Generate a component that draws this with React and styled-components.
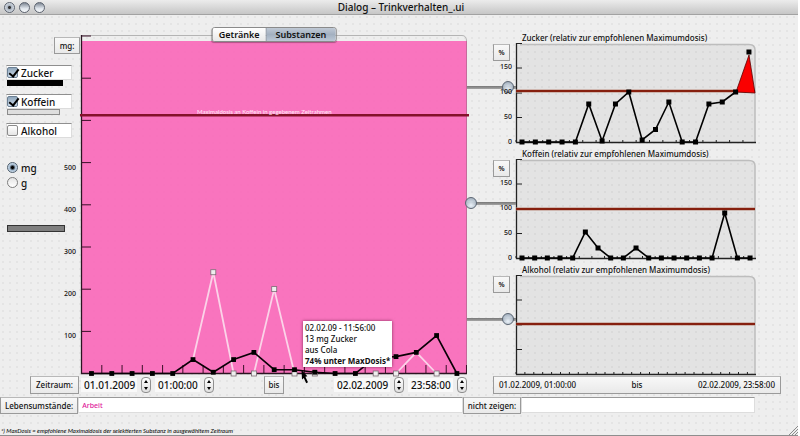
import React, { useState } from 'react'
import styled, { createGlobalStyle, css } from 'styled-components';

const zuckerMain = [0, 0, 0, 0, 0, 33, 3, 33, 50, 9, 9, 3, 0, 0, 38, 40, 50, 90, 0];
const koffeinPeaks = [
    [[5, 33], [6, 240], [7, 0]],
    [[8, 0], [9, 200], [10, 0]],
    [[15, 0], [16, 50], [17, 0]],
];
const koffeinMarks = [[6, 240], [7, 0], [8, 0], [9, 200], [10, 0], [11, 0], [14, 0], [15, 0], [17, 0]];

const panels = [
    {
        name: 'Zucker',
        slider: 100,
        labels: [150, 100, 50, 0],
        limit: 48,
        tick: 13.35,
        step: 13.35,
        data: [0, 0, 0, 0, 0, 76, 2, 76, 100, 4, 25, 80, 0, 0, 76, 80, 100, 180],
        over: '220,49 233,12 239,50',
    },
    {
        name: 'Koffein',
        slider: 0,
        labels: [150, 100, 50, 0],
        limit: 50,
        tick: 12.65,
        step: 12.67,
        data: [0, 0, 0, 0, 0, 52, 20, 0, 0, 20, 0, 0, 0, 0, 0, 0, 90, 0, 0],
    },
    {
        name: 'Alkohol',
        slider: 100,
        labels: [],
        limit: 49,
        tick: 8.9,
        step: 0,
        data: [],
    },
];

const mainX = (i) => 10.5 + i * 20.3;
const mainY = (v) => 338.5 - v * 0.422;

const MainChart = () => {
    const points = zuckerMain.map((v, i) => [mainX(i), mainY(v)]);
    return (
        <ChartSvg $height={340} viewBox='0 0 386 340' preserveAspectRatio='none'>
            <path d='M0 0.5H381Q385.5 0.5 385.5 6' fill='none' stroke='#b4b4b4' />
            <rect x='0' y='6' width='386' height='333' fill='#fb5bb4' fillOpacity='0.83' />
            <path d='M385.5 6V338' stroke='#c76a9c' />
            {[0, 1, 2, 3, 4, 5, 6, 7].map((i) => (
                <path key={i} d={`M0 ${1 + i * 42.2}H10`} stroke='#3a1028' />
            ))}
            {Array.from({ length: 19 }, (_, i) => (
                <path key={i} d={`M${20.8 + i * 20.26} 330V338`} stroke='#3a1028' />
            ))}
            <path d='M0.5 0V338.5H386' fill='none' stroke='#2c1422' strokeWidth='1.3' />
            {koffeinPeaks.map((peak, i) => (
                <polyline
                    key={i}
                    points={peak.map(([n, v]) => `${mainX(n)},${mainY(v)}`).join(' ')}
                    fill='none'
                    stroke='#fbd3e8'
                    strokeWidth='1.8'
                />
            ))}
            {koffeinMarks.map(([n, v]) => (
                <rect key={n} x={mainX(n) - 2.5} y={mainY(v) - 2.5} width='5' height='5' fill='#eee' stroke='#7b6b74' strokeWidth='0.8' />
            ))}
            <polyline points={points.join(' ')} fill='none' stroke='#0a0006' strokeWidth='1.6' />
            {points.map(([x, y]) => (
                <rect key={x} x={x - 2.4} y={y - 2.4} width='4.8' height='4.8' />
            ))}
            <path d='M-1 80.3H388' stroke='#84122b' strokeWidth='2.6' />
        </ChartSvg>
    )
}

const SmallChart = ({ limit, tick, step, data, over }) => {
    const points = data.map((v, i) => [6 + i * step, 99 - v * 0.5]);
    return (
        <ChartSvg $height={101} viewBox='0 0 239 101' preserveAspectRatio='none'>
            <path d='M0 1.5H233Q239 1.5 239 7V99H0Z' fill='#000' fillOpacity='0.045' />
            <path d='M4 1.5H233Q239 1.5 239 7V99' fill='none' stroke='#bdbdbd' strokeWidth='1.5' />
            {Array.from({ length: Math.floor(239 / tick) + 1 }, (_, i) => (
                <path key={i} d={`M${i * tick} 97V99`} stroke='#222' />
            ))}
            {[0.5, 25, 50, 74.5].map((y) => (
                <path key={y} d={`M0 ${y}H6`} stroke='#222' />
            ))}
            <path d='M0.5 0V99.5H240' fill='none' stroke='#222' strokeWidth='1.3' />
            <path d={`M0 ${limit}H239`} stroke='#b98a7c' strokeWidth='3.2' />
            <path d={`M0 ${limit}H239`} stroke='#86200f' strokeWidth='2' />
            {over && <polygon points={over} fill='#fa0000' stroke='#5a0000' strokeWidth='0.8' />}
            <polyline points={points.slice(0, over ? -1 : undefined).join(' ')} fill='none' stroke='#000' strokeWidth='1.6' />
            {points.map(([x, y]) => (
                <rect key={x} x={x - 2.5} y={y - 2.5} width='5' height='5' />
            ))}
        </ChartSvg>
    )
}

const Stepper = ({ name }) => (
    <StepperBox>
        <button type='button' aria-label={`${name} +`}>
            <svg width='4' height='3' viewBox='0 0 4 3'><path d='M2 0L4 3H0Z' /></svg>
        </button>
        <button type='button' aria-label={`${name} -`}>
            <svg width='4' height='3' viewBox='0 0 4 3'><path d='M2 3L4 0H0Z' /></svg>
        </button>
    </StepperBox>
)

const DateTime = ({ id, date, time }) => (
    <DateGroup>
        <DateInput id={id} aria-label='Datum' defaultValue={date} $width={56} />
        <Stepper name='Datum' />
        <DateInput aria-label='Zeit' defaultValue={time} $width={45} />
        <Stepper name='Zeit' />
    </DateGroup>
)

const Panel = ({ panel }) => {
    const [value, setValue] = useState(panel.slider);
    return (
        <PanelGrid>
            <AxisColumn>
                <UnitBox>%</UnitBox>
                <SmallAxis>
                    {panel.labels.map((label) => <span key={label}>{label}</span>)}
                </SmallAxis>
                <Slider
                    type='range'
                    aria-label={panel.name}
                    value={value}
                    onChange={(e) => setValue(e.target.value)}
                />
            </AxisColumn>
            <div>
                <PanelTitle>{panel.name} (relativ zur empfohlenen Maximumdosis)</PanelTitle>
                <SmallChart {...panel} />
            </div>
        </PanelGrid>
    )
}

const App = () => {
    const [tab, setTab] = useState('Substanzen');
    const [unit, setUnit] = useState('mg');

    return (
        <Window>
            <GlobalStyle />
            <TitleBar>
                <Lights>
                    <Light type='button' aria-label='Schließen' $dot />
                    <Light type='button' aria-label='Minimieren' />
                    <Light type='button' aria-label='Zoomen' />
                </Lights>
                <h1>Dialog – Trinkverhalten_.ui</h1>
            </TitleBar>

            <Workspace>
                <Sidebar>
                    <MainUnit>mg:</MainUnit>
                    <Substances>
                        <div>
                            <CheckLabel><Check type='checkbox' defaultChecked />Zucker</CheckLabel>
                            <Swatch $width={56} $color='#000' />
                        </div>
                        <div>
                            <CheckLabel><Check type='checkbox' defaultChecked />Koffein</CheckLabel>
                            <Swatch $width={53} $color='#dedede' $outline />
                        </div>
                        <div>
                            <CheckLabel><Check type='checkbox' />Alkohol</CheckLabel>
                        </div>
                    </Substances>
                    <LowerSide>
                        <UnitChoice>
                            {['mg', 'g'].map((u) => (
                                <RadioLabel key={u}>
                                    <Radio type='radio' name='unit' checked={unit === u} onChange={() => setUnit(u)} />
                                    {u}
                                </RadioLabel>
                            ))}
                            <GreyBar />
                        </UnitChoice>
                        <MainAxis>
                            {[500, 400, 300, 200, 100].map((n) => <span key={n}>{n}</span>)}
                        </MainAxis>
                    </LowerSide>
                </Sidebar>

                <ChartArea>
                    <MainChart />
                    <Tabs>
                        {['Getränke', 'Substanzen'].map((name) => (
                            <Tab key={name} type='button' $active={tab === name} onClick={() => setTab(name)}>{name}</Tab>
                        ))}
                    </Tabs>
                    <LimitText>Maximaldosis an Koffein in gegebenem Zeitrahmen</LimitText>
                    <Tooltip>
                        <p>02.02.09 - 11:56:00</p>
                        <p>13 mg Zucker</p>
                        <p>aus Cola</p>
                        <strong>74% unter MaxDosis*</strong>
                    </Tooltip>
                    <Pointer width='8' height='14' viewBox='0 0 8 14'>
                        <path d='M0.5 0L6.4 6.2L4.4 6.8L7 12.2L5.2 13.2L2.8 8L1 9.6Z' />
                    </Pointer>
                </ChartArea>

                <Panels>
                    {panels.map((panel) => <Panel key={panel.name} panel={panel} />)}
                </Panels>
            </Workspace>

            <RangeRow>
                <RangeLabel htmlFor='from'>Zeitraum:</RangeLabel>
                <RangeFields>
                    <DateTime id='from' date='01.01.2009' time='01:00:00' />
                    <Until htmlFor='to'>bis</Until>
                    <DateTime id='to' date='02.02.2009' time='23:58:00' />
                </RangeFields>
                <RangeSummary>
                    <span>01.02.2009, 01:00:00</span>
                    <span>bis</span>
                    <span>02.02.2009, 23:58:00</span>
                </RangeSummary>
            </RangeRow>

            <FilterRow>
                <FilterLabel htmlFor='life'>Lebensumstände:</FilterLabel>
                <FilterInput id='life' defaultValue='Arbeit' $grow={385} />
                <FilterLabel htmlFor='hide'>nicht zeigen:</FilterLabel>
                <FilterInput id='hide' $grow={232} />
            </FilterRow>

            <Footer>
                <p>*) MaxDosis = empfohlene Maximaldosis der selektierten Substanz in ausgewähltem Zeitraum</p>
                <svg width='9' height='9' viewBox='0 0 9 9'>
                    <path d='M0 9L9 0M3 9L9 3M6 9L9 6' stroke='#8a8a8a' />
                </svg>
            </Footer>
        </Window>
    )
}

export default App;

const GlobalStyle = createGlobalStyle`
* {
    box-sizing: border-box;
}
body {
    margin: 0;
    background: #fff;
    color: #111;
    font-family: "Noto Sans", "Open Sans", sans-serif;
    font-size: 9px;
    font-weight: 500;
    line-height: 12px;
}
p, h1 {
    margin: 0;
}
button, input {
    font: inherit;
    color: inherit;
    margin: 0;
    padding: 0;
    border: 0;
}
`

const columns = css`
    display: grid;
    grid-template-columns: 81px minmax(0, 386fr) 49px minmax(0, 239fr) 43px;
`

const box = css`
    border: 1px solid #9a9a9a;
    border-top-color: #b8b8b8;
    background: linear-gradient(#f8f8f8, #e9e9e9);
`

const Window = styled.main`
    min-height: 100vh;
    margin-right: 2px;
    display: flex;
    flex-direction: column;
    border-bottom: 1px solid #8e8e8e;
    background-color: #eee;
    background-image: radial-gradient(circle at 3px 3px, #e4e4e4 0, #e4e4e4 1px, transparent 1px);
    background-size: 7px 7px;
`

const TitleBar = styled.header`
    display: grid;
    grid-template-columns: 1fr auto 1fr;
    align-items: center;
    height: 15px;
    padding-left: 4px;
    background: linear-gradient(#ececec, #c6c6c6);
    border-bottom: 1px solid #a2a2a2;

    h1 {
        font-size: 10px;
        font-weight: 500;
    }
`

const Lights = styled.div`
    display: flex;
    gap: 4px;
`

const Light = styled.button`
    width: 11px;
    height: 11px;
    border-radius: 50%;
    border: 1px solid #5d6470;
    background: ${(props) => (props.$dot
        ? 'radial-gradient(circle, #333 0 1px, #a9b2be 2px, #dde3ea 5px)'
        : 'linear-gradient(#7e8794, #dfe5ec 60%, #f7f9fb)')};
`

const Workspace = styled.div`
    ${columns}
`

const Sidebar = styled.aside`
    display: flex;
    flex-direction: column;
    padding-top: 22px;
`

const MainUnit = styled.span`
    ${box}
    align-self: flex-end;
    width: 26px;
    margin-right: 1px;
    line-height: 15px;
    text-align: center;
    font-size: 8px;
`

const Substances = styled.div`
    display: grid;
    grid-template-rows: 29px 29px 15px;
    margin: 11px 9px 9px 6px;
`

const CheckLabel = styled.label`
    display: flex;
    align-items: center;
    gap: 3px;
    height: 15px;
    font-size: 10px;
    background: #fff;
    border: 1px solid #dcdcdc;
    border-top-color: #8f8f8f;
`

const Check = styled.input`
    appearance: none;
    position: relative;
    width: 11px;
    height: 11px;
    border: 1px solid #8b8b8b;
    border-radius: 2px;
    background: linear-gradient(#fff, #e6e6e6);

    &:checked {
        border-color: #6b7f93;
        background: linear-gradient(#8fa6bb, #cddceb);
    }

    &:checked::after {
        content: '';
        position: absolute;
        left: 3px;
        top: -1px;
        width: 4px;
        height: 8px;
        border: solid #000;
        border-width: 0 2px 2px 0;
        transform: rotate(38deg);
    }
`

const Swatch = styled.div`
    width: ${(props) => props.$width}px;
    height: 6px;
    margin-left: 1px;
    background: ${(props) => props.$color};
    border: 1px solid ${(props) => (props.$outline ? '#8c8c8c' : props.$color)};
`

const LowerSide = styled.div`
    display: flex;
    justify-content: space-between;
    padding: 0 5px 0 7px;
`

const UnitChoice = styled.div`
    width: 58px;
    margin-right: -4px;
    padding-top: 13px;
`

const RadioLabel = styled.label`
    display: flex;
    align-items: center;
    gap: 3px;
    height: 15px;
    font-size: 10px;
`

const Radio = styled.input`
    appearance: none;
    width: 11px;
    height: 11px;
    border: 1px solid #7d7d7d;
    border-radius: 50%;
    background: linear-gradient(#e4e4e4, #fff);

    &:checked {
        border-color: #50606f;
        background: radial-gradient(circle, #000 0 1px, #a7bdd2 3px, #d4e2ef 5px);
    }
`

const GreyBar = styled.div`
    height: 7px;
    margin-top: 35px;
    background: #7f7f7f;
    border: 1px solid #333;
`

const MainAxis = styled.div`
    display: flex;
    flex-direction: column;
    text-align: right;
    font-size: 7px;
    line-height: 42px;
`

const ChartArea = styled.section`
    position: relative;
    padding-top: 20px;
`

const ChartSvg = styled.svg`
    display: block;
    width: 100%;
    height: ${(props) => props.$height}px;
    overflow: visible;
`

const Tabs = styled.div`
    position: absolute;
    top: 12px;
    left: 50%;
    transform: translateX(-50%);
    display: flex;
    border: 1px solid #8a8a8a;
    border-radius: 3px;
    overflow: hidden;
    box-shadow: 0 1px 1px rgba(0, 0, 0, 0.3);
`

const Tab = styled.button`
    height: 13px;
    padding: 0 6px;
    font-size: 9px;
    font-weight: 600;
    line-height: 13px;
    background: ${(props) => (props.$active
        ? 'linear-gradient(#c0c9d5, #a3b0c0 50%, #bcc8d6)'
        : 'linear-gradient(#fff, #e8e8e8)')};

    & + & {
        padding: 0 9px;
        border-left: 1px solid #8c97a5;
    }
`

const LimitText = styled.p`
    position: absolute;
    top: 91px;
    left: 116px;
    color: #ffe3f3;
    font-size: 6px;
    white-space: nowrap;
    font-family: Lato, sans-serif;
`

const Tooltip = styled.div`
    position: absolute;
    top: 306px;
    left: 222px;
    width: 89px;
    padding: 1px 2px;
    background: #fff;
    box-shadow: 0 0 3px rgba(60, 0, 30, 0.6);
    font-size: 8px;
    line-height: 11px;
    white-space: nowrap;

    strong {
        display: block;
    }
`

const Pointer = styled.svg`
    position: absolute;
    top: 355px;
    left: 220px;
`

const Panels = styled.section`
    grid-column: 3 / 5;
    padding-top: 17px;
`

const PanelGrid = styled.div`
    display: grid;
    grid-template-columns: 49px minmax(0, 1fr);
`

const AxisColumn = styled.div`
    position: relative;
    display: flex;
    flex-direction: column;
    align-items: flex-end;
    padding: 12px 4px 0 0;

    &::before {
        content: '';
        position: absolute;
        top: 54px;
        left: 0;
        right: 0;
        height: 3px;
        background: linear-gradient(#777, #a5a5a5);
    }
`

const UnitBox = styled.span`
    ${box}
    width: 17px;
    margin-right: 2px;
    line-height: 15px;
    text-align: center;
    font-size: 7px;
    font-weight: 600;
`

const SmallAxis = styled.div`
    position: relative;
    z-index: 1;
    display: flex;
    flex-direction: column;
    gap: 13px;
    text-align: right;
    font-size: 7px;
    pointer-events: none;
`

const Slider = styled.input`
    appearance: none;
    position: absolute;
    top: 49px;
    left: -2px;
    width: 49px;
    height: 12px;
    background: none;

    &::-webkit-slider-thumb {
        appearance: none;
        width: 12px;
        height: 12px;
        border: 1px solid #5a6572;
        border-radius: 50%;
        background: radial-gradient(circle at 50% 70%, rgba(235, 243, 250, 0.95), rgba(140, 155, 172, 0.9));
    }
`

const PanelTitle = styled.h2`
    margin: 0 0 0 6px;
    font-size: 8px;
    font-weight: 500;
    line-height: 11px;
    white-space: nowrap;
`

const RangeRow = styled.div`
    ${columns}
    height: 18px;
`

const RangeLabel = styled.label`
    ${box}
    justify-self: end;
    margin-right: 2px;
    padding: 0 5px;
    line-height: 16px;
    font-size: 8px;
`

const RangeFields = styled.div`
    display: flex;
    justify-content: space-between;
    align-items: center;
`

const DateGroup = styled.div`
    display: flex;
    align-items: center;
    gap: 4px;
`

const DateInput = styled.input`
    width: ${(props) => props.$width}px;
    height: 14px;
    padding-left: 3px;
    background: #f9f9f9;
    font-size: 10px;
`

const StepperBox = styled.span`
    display: flex;
    flex-direction: column;
    width: 10px;
    height: 16px;
    border: 1px solid #8f8f8f;
    border-radius: 4px;
    background: linear-gradient(#fff, #dfdfdf);

    button {
        flex: 1;
        display: grid;
        place-items: center;
        background: none;
    }
`

const Until = styled.label`
    ${box}
    padding: 0 3px;
    line-height: 16px;
    font-size: 8px;
`

const RangeSummary = styled.div`
    ${box}
    grid-column: 3 / 6;
    display: flex;
    justify-content: space-between;
    margin: 0 17px 0 26px;
    padding: 0 5px;
    font-size: 8px;
    line-height: 16px;
`

const FilterRow = styled.div`
    display: flex;
    align-items: flex-start;
    height: 18px;
    margin: 3px 43px 0 0;
`

const FilterLabel = styled.label`
    ${box}
    padding: 0 4px;
    font-size: 8px;
    line-height: 15px;
`

const FilterInput = styled.input`
    flex: ${(props) => props.$grow} 1 0;
    min-width: 0;
    height: 16px;
    padding-left: 3px;
    background: #fff;
    border: 1px solid #ddd;
    border-top-color: #999;
    color: #e0189a;
    font-size: 7px;
`

const Footer = styled.footer`
    display: flex;
    flex: 1;
    justify-content: space-between;
    align-items: flex-end;
    padding-left: 1px;

    p {
        font-family: Lato, sans-serif;
        font-size: 6px;
        font-style: italic;
        line-height: 8px;
    }
`
